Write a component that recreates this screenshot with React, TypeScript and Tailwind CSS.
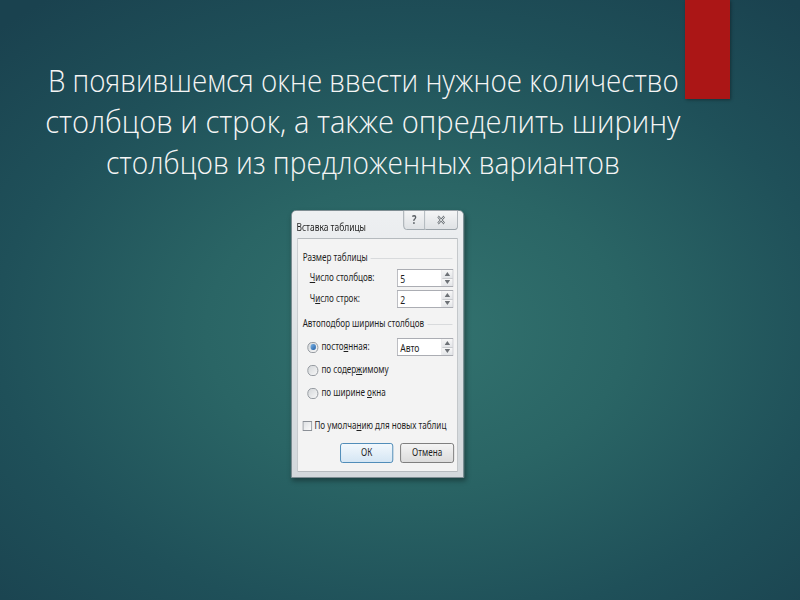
import React from "react";

const U = ({ children }: { children: React.ReactNode }) => (
  <span className="underline underline-offset-[1px]">{children}</span>
);

const Spin = () => (
  <div className="flex flex-col w-[14px] h-full border-l border-[#d5d7da]">
    <div className="flex-1 flex items-center justify-center bg-gradient-to-b from-[#f7f7f7] to-[#e3e5e8] border-b border-[#c9cbce]">
      <svg width="7" height="4" viewBox="0 0 7 4"><path d="M0 4 L3.5 0 L7 4 Z" fill="#6d7176" /></svg>
    </div>
    <div className="flex-1 flex items-center justify-center bg-gradient-to-b from-[#f7f7f7] to-[#e3e5e8]">
      <svg width="7" height="4" viewBox="0 0 7 4"><path d="M0 0 L3.5 4 L7 0 Z" fill="#6d7176" /></svg>
    </div>
  </div>
);

const Field = ({ value }: { value: string }) => (
  <div className="ml-auto mr-[5px] w-[72px] h-[18px] bg-white border border-[#abadb3] flex items-stretch">
    <div className="flex-1 pl-[3px] flex items-center text-[11px] leading-none">{value}</div>
    <Spin />
  </div>
);

const Radio = ({ on }: { on?: boolean }) => (
  <div className="w-[14px] h-[11px] rounded-full border border-[#8b9097] bg-gradient-to-br from-[#d4d7da] to-[#f7f7f7] flex items-center justify-center">
    {on && <div className="w-[7px] h-[6px] rounded-full bg-gradient-to-br from-[#7fb6e6] to-[#1f5fa6]" />}
  </div>
);

export default function App() {
  return (
    <div
      className="relative w-[800px] h-[600px] overflow-hidden bg-[radial-gradient(ellipse_75%_70%_at_52%_55%,#33736f_0%,#2a6565_35%,#1f5059_70%,#1a424f_100%)]"
      style={{ fontFamily: '"Noto Sans", sans-serif' }}
    >
      <div className="absolute left-[685px] top-0 w-[45px] h-[99px] bg-[#ab1616] shadow-[1px_1px_3px_rgba(0,0,0,0.35)]" />

      <div
        className="pt-[60px] w-[726px] text-center text-[#f5f5f5] text-[31px] leading-[41px] font-light"
        style={{ fontFamily: '"Open Sans", sans-serif' }}
      >
        <div><span className="inline-block whitespace-nowrap scale-x-[0.895]">В появившемся окне ввести нужное количество</span></div>
        <div><span className="inline-block whitespace-nowrap scale-x-[0.94]">столбцов и строк, а также определить ширину</span></div>
        <div><span className="inline-block whitespace-nowrap scale-x-[0.905]">столбцов из предложенных вариантов</span></div>
      </div>

      <div className="ml-[291px] mt-[27px] w-[173px] h-[268px]">
        <div className="w-[222px] h-[268px] origin-top-left scale-x-[0.78] rounded-t-[6px] border border-[#8a9399] bg-gradient-to-b from-[#eef0f2] via-[#dde1e4] to-[#d3d8dc] shadow-[2px_3px_6px_rgba(0,0,0,0.35)] flex flex-col text-[#1e1e1e]">
          <div className="flex h-[27px] items-start">
            <div className="ml-[6px] mt-[9px] text-[10.8px] leading-[14px]">Вставка таблицы</div>
            <div className="ml-auto mr-[7px] flex -mt-px">
              <div className="w-[28px] h-[20px] border border-[#9aa2a8] rounded-bl-[4px] bg-gradient-to-b from-[#f4f5f6] to-[#dfe2e5] flex items-center justify-center text-[12px] text-[#5a5f64] font-bold">?</div>
              <div className="w-[42px] h-[20px] border border-l-0 border-[#9aa2a8] rounded-br-[4px] bg-gradient-to-b from-[#f4f5f6] to-[#dfe2e5] flex items-center justify-center">
                <svg width="11" height="10" viewBox="0 0 11 10">
                  <path d="M1.5 1.5 L9.5 8.5 M9.5 1.5 L1.5 8.5" stroke="#6a7075" strokeWidth="2.6" fill="none" />
                  <path d="M1.5 1.5 L9.5 8.5 M9.5 1.5 L1.5 8.5" stroke="#eef0f1" strokeWidth="1" fill="none" />
                </svg>
              </div>
            </div>
          </div>

          <div className="mx-[7px] w-[206px] h-[234px] border border-[#b5babe] bg-[#f3f3f3] flex flex-col text-[10.4px]">
            <div className="mt-[12px] h-[14px] flex items-center pl-[6px]">
              <span>Размер таблицы</span>
              <div className="flex-1 ml-[4px] mr-[6px] border-t border-[#d8dadc]" />
            </div>
            <div className="mt-[4px] h-[18px] flex items-center pl-[15px]">
              <span><U>Ч</U>исло столбцов:</span>
              <Field value="5" />
            </div>
            <div className="mt-[3px] h-[18px] flex items-center pl-[15px]">
              <span>Ч<U>и</U>сло строк:</span>
              <Field value="2" />
            </div>
            <div className="mt-[9px] h-[14px] flex items-center pl-[6px]">
              <span>Автоподбор ширины столбцов</span>
              <div className="flex-1 ml-[4px] mr-[6px] border-t border-[#d8dadc]" />
            </div>
            <div className="mt-[7px] h-[18px] flex items-center pl-[12px]">
              <Radio on />
              <span className="ml-[4px]">посто<U>я</U>нная:</span>
              <Field value="Авто" />
            </div>
            <div className="mt-[5px] h-[18px] flex items-center pl-[12px]">
              <Radio />
              <span className="ml-[4px]">по содер<U>ж</U>имому</span>
            </div>
            <div className="mt-[5px] h-[18px] flex items-center pl-[12px]">
              <Radio />
              <span className="ml-[4px]">по ширине <U>о</U>кна</span>
            </div>
            <div className="mt-[15px] h-[18px] flex items-center pl-[6px]">
              <div className="w-[12px] h-[10px] border border-[#8b9097] bg-gradient-to-br from-[#dfe1e4] to-[#fbfbfb]" />
              <span className="ml-[3px]">По умолча<U>н</U>ию для новых таблиц</span>
            </div>
            <div className="mt-[8px] h-[20px] flex justify-end pr-[4px] gap-[9px]">
              <div className="w-[68px] h-[20px] rounded-[3px] border border-[#3c7fb1] bg-gradient-to-b from-[#f2f8fd] to-[#d5e6f4] flex items-center justify-center">ОК</div>
              <div className="w-[69px] h-[20px] rounded-[3px] border border-[#707070] bg-gradient-to-b from-[#f4f4f4] to-[#dcdcdc] flex items-center justify-center">Отмена</div>
            </div>
          </div>
        </div>
      </div>
    </div>
  );
}
